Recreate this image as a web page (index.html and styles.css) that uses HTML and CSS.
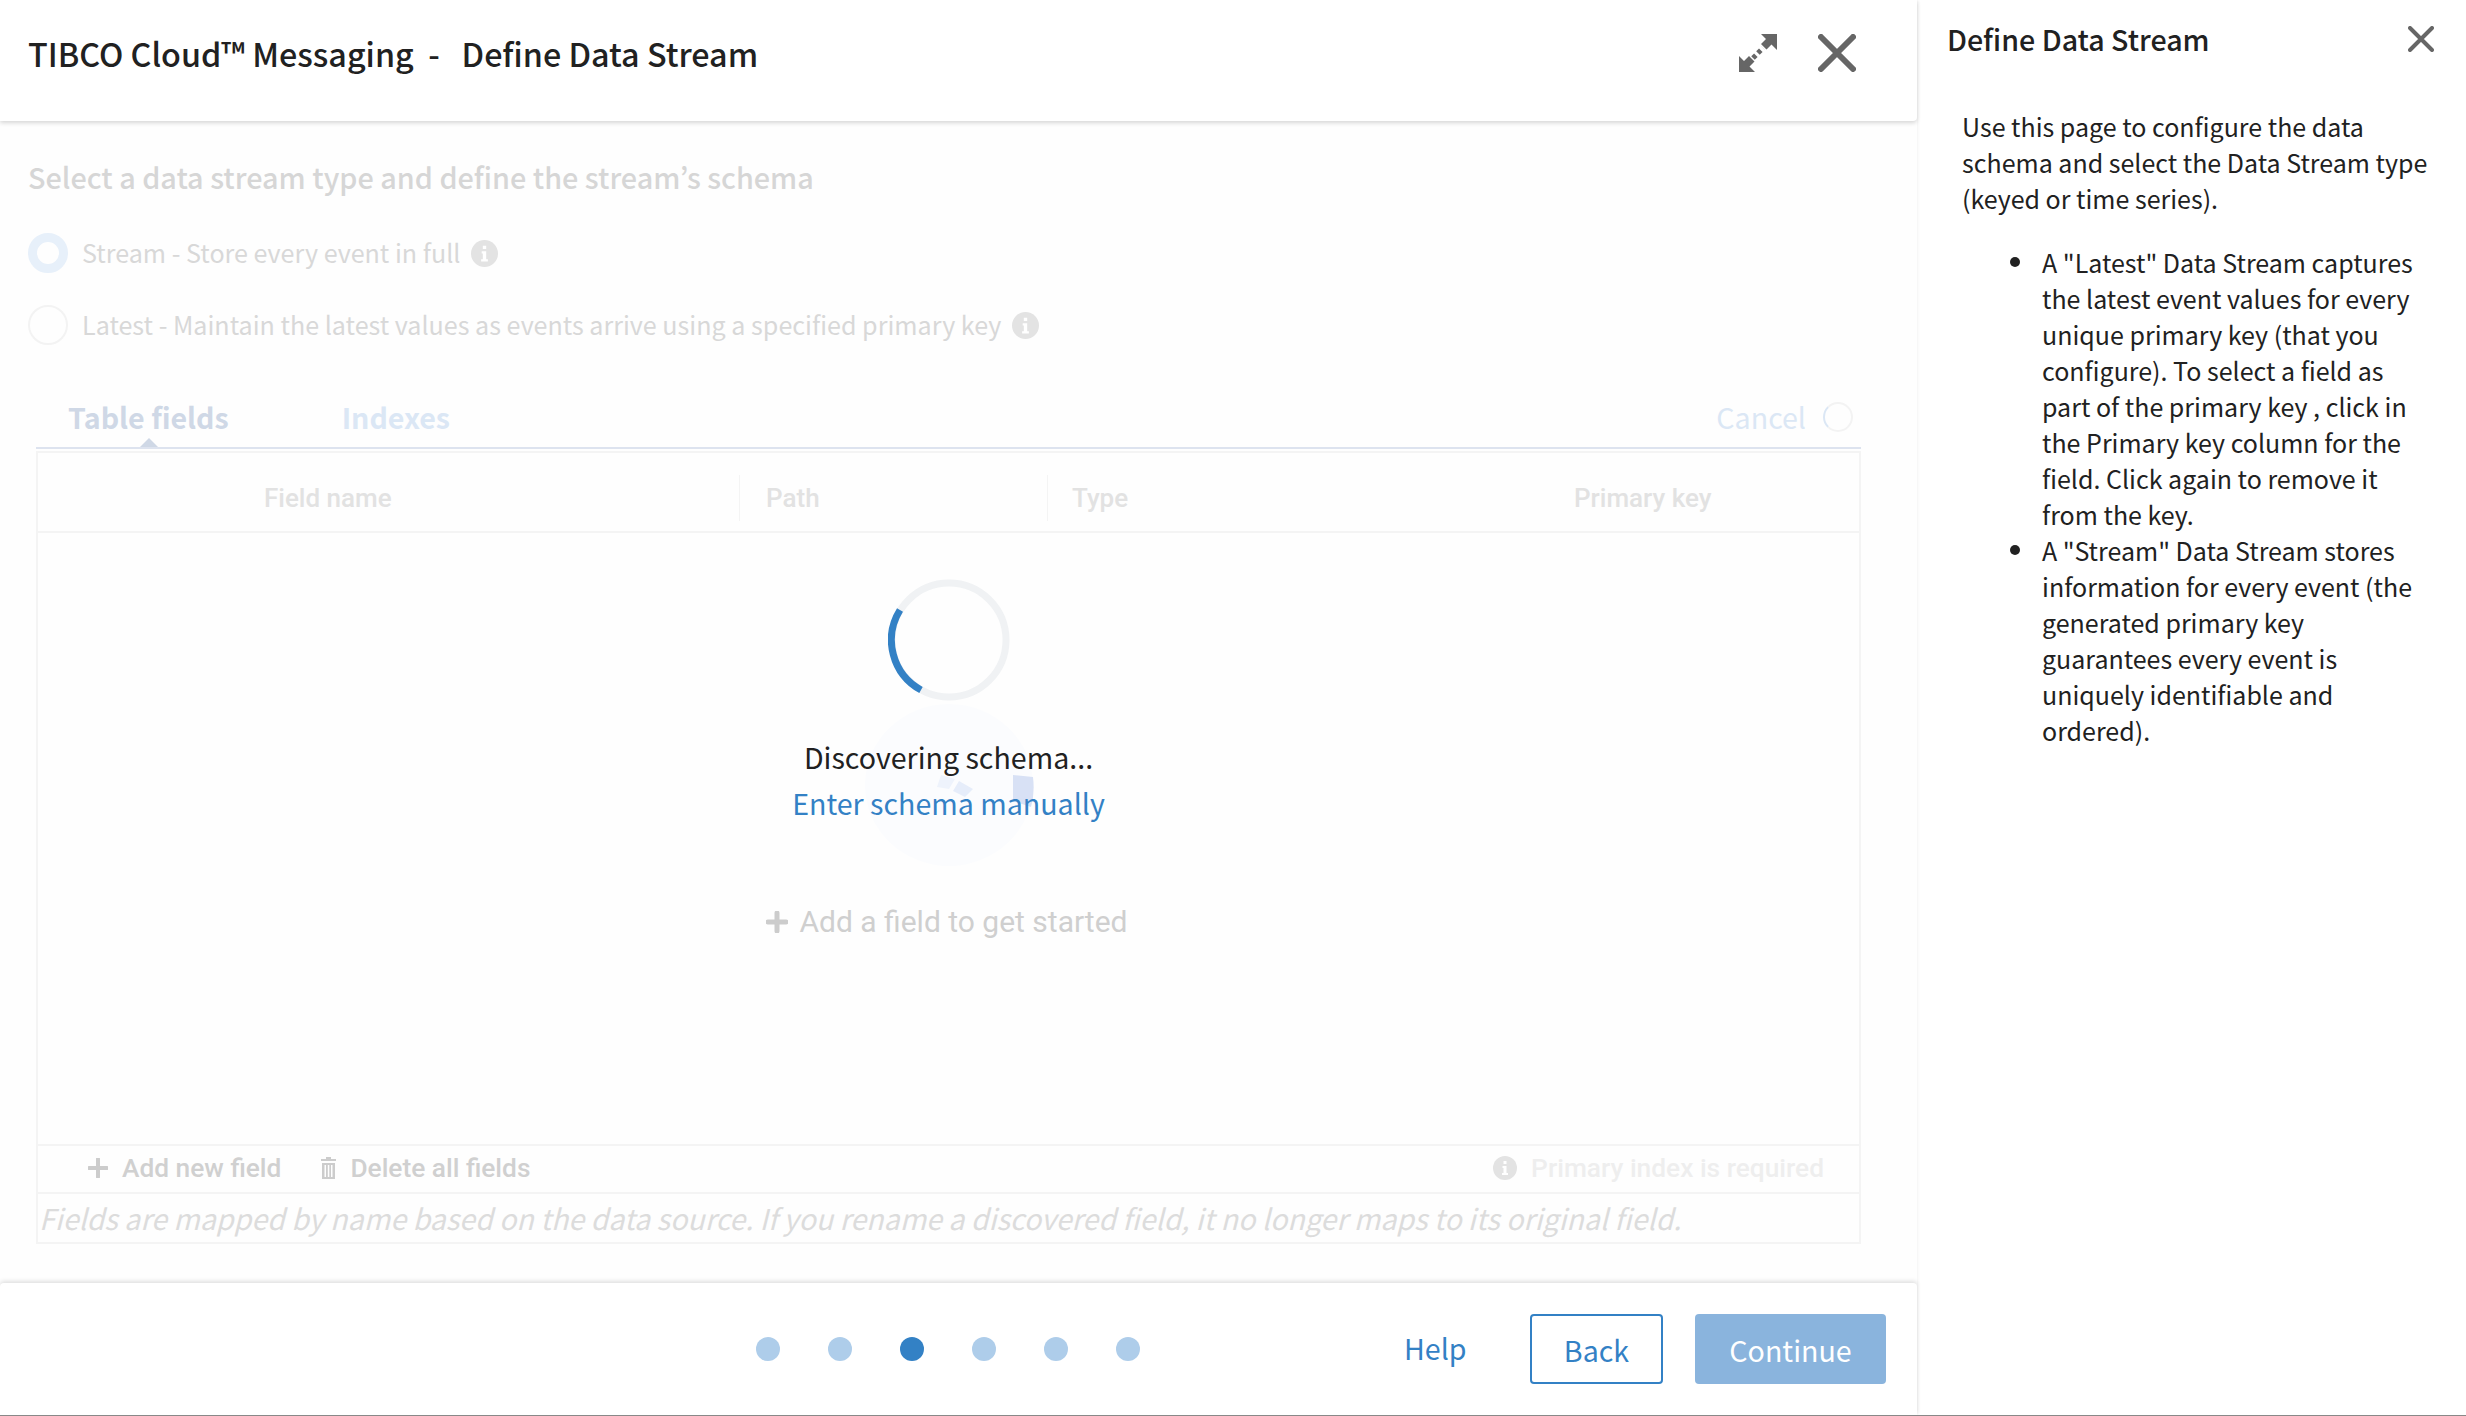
FILE: index.html
```html
<!DOCTYPE html>
<html lang="en">
  <head>
    <meta charset="UTF-8" />
    <title>Define Data Stream</title>
    <link rel="stylesheet" href="styles.css">
  </head>
  <body>
    <div class="app">
      <section class="wizard">
        <header class="wizard-head">
          <h1 class="wizard-title">TIBCO Cloud™ Messaging&nbsp; - &nbsp;&nbsp;Define Data Stream</h1>
          <div class="head-icons">
            <svg class="icon-expand" width="40" height="40" viewBox="0 0 40 40">
              <path d="M23 1h16v16l-5.500-5.500-5 5-5.500-5.500 5-5zM1 39h16l-5.500-5.500 5-5-5.500-5.500-5 5L1 23z" fill="#666"/>
              <path d="M15 25l10-10" stroke="#666" stroke-width="5" stroke-dasharray="4 3"/>
            </svg>
            <svg class="icon-close" width="38" height="38" viewBox="0 0 38 38">
              <path d="M3 3l32 32M35 3L3 35" stroke="#666" stroke-width="6" stroke-linecap="round"/>
            </svg>
          </div>
        </header>

        <main class="wizard-body">
          <h2 class="section-title">Select a data stream type and define the stream’s schema</h2>

          <div class="radio-row">
            <span class="radio radio-on"></span>
            <span class="radio-label">Stream - Store every event in full</span>
            <svg class="info" width="27" height="27" viewBox="0 0 24 24">
              <circle cx="12" cy="12" r="12" fill="#e3e3e3"/>
              <path d="M9.500 10h4v7h1.500v2H9v-2h1.500v-5h-1zM10.500 5h3v3h-3z" fill="#fff"/>
            </svg>
          </div>
          <div class="radio-row">
            <span class="radio"></span>
            <span class="radio-label">Latest - Maintain the latest values as events arrive using a specified primary key</span>
            <svg class="info" width="27" height="27" viewBox="0 0 24 24">
              <circle cx="12" cy="12" r="12" fill="#e3e3e3"/>
              <path d="M9.500 10h4v7h1.500v2H9v-2h1.500v-5h-1zM10.500 5h3v3h-3z" fill="#fff"/>
            </svg>
          </div>

          <div class="tabs">
            <span class="tab tab-active">Table fields</span>
            <span class="tab">Indexes</span>
            <span class="tab-cancel">Cancel</span>
            <span class="cancel-spin"></span>
          </div>

          <div class="grid-box">
            <div class="grid-head">
              <span class="col col-name">Field name</span>
              <span class="col col-path">Path</span>
              <span class="col col-type">Type</span>
              <span class="col col-key">Primary key</span>
            </div>

            <div class="grid-empty">
              <div class="add-hint">
                <svg width="22" height="22" viewBox="0 0 22 22"><path d="M11 2v18M2 11h18" stroke="#ccc" stroke-width="5" stroke-linecap="round"/></svg>
                <span>Add a field to get started</span>
              </div>

              <div class="loader">
                <svg class="loader-spin" width="122" height="122" viewBox="0 0 122 122">
                  <circle cx="61" cy="61" r="57" fill="none" stroke="#f0f2f4" stroke-width="7"/>
                  <path d="M12 31A57 57 0 0 0 33 111" fill="none" stroke="#3381c5" stroke-width="7"/>
                </svg>
                <div class="loader-ghost">
                  <svg width="170" height="164" viewBox="0 0 170 164">
                    <ellipse cx="84" cy="82" rx="84" ry="81" fill="#fbfcfe"/>
                    <path d="M148 72l20 2q2 16-2 30l-18-6z" fill="#d8e1f5"/>
                    <path d="M76 72l14 4-6 10-12-2z" fill="#eef3fc"/>
                    <path d="M94 78l14 8-8 8-12-6z" fill="#e6edfa"/>
                  </svg>
                </div>
                <div class="loader-text">Discovering schema...</div>
                <a class="loader-link">Enter schema manually</a>
              </div>
            </div>

            <div class="grid-tools">
              <span class="tool">
                <svg width="20" height="20" viewBox="0 0 20 20"><path d="M10 1v18M1 10h18" stroke="#ccc" stroke-width="4" stroke-linecap="round"/></svg>
                Add new field
              </span>
              <span class="tool">
                <svg width="15" height="22" viewBox="0 0 15 22"><path d="M5 0h5v2h5v2H0V2h5zM1 6h13v16H1zM3.500 8v12h1.500V8zM6.800 8v12h1.500V8zM10 8v12h1.500V8z" fill="#ccc" fill-rule="evenodd"/></svg>
                Delete all fields
              </span>
              <span class="tool-warn">
                <svg width="24" height="24" viewBox="0 0 24 24">
                  <circle cx="12" cy="12" r="12" fill="#e3e3e3"/>
                  <path d="M9.500 10h4v7h1.500v2H9v-2h1.500v-5h-1zM10.500 5h3v3h-3z" fill="#fff"/>
                </svg>
                Primary index is required
              </span>
            </div>
          </div>
          <p class="grid-note">Fields are mapped by name based on the data source. If you rename a discovered field, it no longer maps to its original field.</p>
        </main>

        <footer class="wizard-foot">
          <div class="steps">
            <span class="step"></span>
            <span class="step"></span>
            <span class="step step-on"></span>
            <span class="step"></span>
            <span class="step"></span>
            <span class="step"></span>
          </div>
          <a class="help-link">Help</a>
          <button class="btn btn-back">Back</button>
          <button class="btn btn-next">Continue</button>
        </footer>
      </section>

      <aside class="help-panel">
        <div class="help-head">
          <h3 class="help-title">Define Data Stream</h3>
          <svg width="26" height="26" viewBox="0 0 26 26"><path d="M2 2l22 22M24 2L2 24" stroke="#666" stroke-width="4" stroke-linecap="round"/></svg>
        </div>
        <p class="help-intro">Use this page to configure the data schema and select the Data Stream type (keyed or time series).</p>
        <ul class="help-list">
          <li>A "Latest" Data Stream captures the latest event values for every unique primary key (that you configure). To select a field as part of the primary key , click in the Primary key column for the field. Click again to remove it from the key.</li>
          <li>A "Stream" Data Stream stores information for every event (the generated primary key guarantees every event is uniquely identifiable and ordered).</li>
        </ul>
      </aside>
    </div>
  </body>
</html>
```

FILE: styles.css
```css
* {
  margin: 0;
  padding: 0;
  box-sizing: border-box;
}
body {
  background-color: #fff;
  font-family: "Noto Sans CJK KR", "Liberation Sans", sans-serif;
  color: #212121;
}
.app {
  display: flex;
  width: 2466px;
  height: 1416px;
  overflow: hidden;
  border-bottom: 1px solid #888;
}
.wizard {
  display: flex;
  flex-direction: column;
  width: 1917px;
  background-color: #fefefe;
  box-shadow: 0 0 4px rgba(0, 0, 0, 0.08);
}
.wizard-head {
  display: flex;
  align-items: center;
  justify-content: space-between;
  height: 121px;
  padding: 0 61px 15px 28px;
  background-color: #fff;
  border-radius: 0 0 4px 0;
  box-shadow: 0 2px 4px rgba(0, 0, 0, 0.16);
}
.wizard-title {
  font-size: 32.300px;
  line-height: 44px;
  font-weight: 500;
}
.head-icons {
  display: flex;
  align-items: center;
  gap: 40px;
}
.wizard-body {
  flex: 1;
  padding: 35px 56px 0 28px;
}
.section-title {
  font-size: 28.800px;
  line-height: 42px;
  font-weight: 500;
  color: #d6d6d6;
  margin-bottom: 35px;
}
.radio-row {
  display: flex;
  align-items: center;
  height: 40px;
  margin-bottom: 32px;
}
.radio {
  width: 40px;
  height: 40px;
  border: 2px solid #f3f3f3;
  border-radius: 50%;
  margin-right: 14px;
}
.radio-on {
  border: 9px solid #e7f0fa;
}
.radio-label {
  font-size: 25.100px;
  color: #d8d8d8;
  margin: 0 11px 2px 0;
}
.tabs {
  display: flex;
  align-items: center;
  height: 72px;
  margin-left: 8px;
  padding: 9px 8px 0 32px;
  border-bottom: 2px solid #dde3ef;
  position: relative;
}
.tab {
  font-size: 28.600px;
  font-weight: 700;
  color: #dbe7f5;
  margin-right: 113px;
}
.tab-active {
  color: #cfd8e6;
}
.tab-active::after {
  content: "";
  position: absolute;
  left: 104px;
  bottom: 0;
  border: 9px solid transparent;
  border-top: 0;
  border-bottom-color: #cfd8e6;
}
.tab-cancel {
  margin-left: auto;
  font-size: 28.600px;
  color: #dbe7f5;
}
.cancel-spin {
  width: 30px;
  height: 30px;
  margin-left: 17px;
  border: 2px solid #f3f3f3;
  border-left-color: #dbe7f5;
  border-radius: 50%;
}
.grid-box {
  margin-left: 8px;
  margin-top: 2px;
  height: 743px;
  display: flex;
  flex-direction: column;
  border: 2px solid #f4f4f4;
  font-family: Roboto, sans-serif;
}
.grid-head {
  display: flex;
  align-items: center;
  height: 80px;
  flex-shrink: 0;
  border-bottom: 2px solid #f4f4f4;
  font-size: 26px;
  font-weight: 500;
  color: #e2e2e2;
}
.col {
  display: flex;
  align-items: center;
  height: 46px;
  margin-top: 12px;
}
.col-name {
  width: 702px;
  padding-left: 226px;
  border-right: 1px solid #f4f4f4;
}
.col-path {
  width: 308px;
  padding-left: 26px;
  border-right: 1px solid #f4f4f4;
}
.col-type {
  width: 526px;
  padding-left: 24px;
}
.grid-empty {
  position: relative;
  flex: 1;
}
.add-hint {
  display: flex;
  align-items: center;
  justify-content: center;
  gap: 11px;
  margin-top: 369px;
  padding-right: 3px;
  font-size: 30px;
  line-height: 40px;
  color: #cfcfcf;
}
.loader {
  position: absolute;
  left: 0;
  right: 0;
  top: 46px;
  text-align: center;
}
.loader-spin {
  display: block;
  margin: 0 auto;
}
.loader-ghost {
  position: absolute;
  left: 827px;
  top: 124px;
  line-height: 0;
}
.loader-text {
  position: relative;
  margin-top: 33px;
  font-family: "Noto Sans CJK KR", sans-serif;
  font-size: 28.600px;
  line-height: 46px;
  color: #212121;
}
.loader-link {
  position: relative;
  display: block;
  font-family: "Noto Sans CJK KR", sans-serif;
  font-size: 28.600px;
  line-height: 46px;
  color: #3381c5;
}
.grid-tools {
  display: flex;
  align-items: center;
  height: 48px;
  flex-shrink: 0;
  padding: 0 35px 2px 50px;
  border-top: 2px solid #f4f4f4;
  font-size: 26.300px;
  font-weight: 500;
  color: #d0d0d0;
}
.tool {
  display: flex;
  align-items: center;
  gap: 14px;
  margin-right: 40px;
}
.tool-warn {
  display: flex;
  align-items: center;
  gap: 14px;
  margin-left: auto;
  color: #eeeeee;
}
.grid-note {
  margin-left: 8px;
  height: 50px;
  padding-left: 1px;
  border: 2px solid #f4f4f4;
  border-top: 0;
  font-size: 28.600px;
  line-height: 47px;
  font-style: italic;
  color: #dcdcdc;
}
.wizard-foot {
  display: flex;
  align-items: center;
  height: 132px;
  padding: 0 31px 0 756px;
  background-color: #fff;
  border-radius: 4px 4px 0 0;
  box-shadow: 0 -2px 4px rgba(0, 0, 0, 0.12);
}
.steps {
  display: flex;
  gap: 48px;
  margin-right: 264px;
}
.step {
  width: 24px;
  height: 24px;
  border-radius: 50%;
  background-color: #aecdea;
}
.step-on {
  background-color: #3381c5;
}
.help-link {
  font-size: 28.600px;
  color: #3381c5;
  margin: 0 auto 3px 0;
}
.btn {
  flex-shrink: 0;
  height: 70px;
  font-family: inherit;
  font-size: 28.600px;
  border-radius: 4px;
}
.btn-back {
  width: 133px;
  margin-right: 32px;
  background-color: #fff;
  border: 2px solid #3381c5;
  color: #3381c5;
}
.btn-next {
  width: 191px;
  background-color: #8ab4dd;
  border: none;
  color: #fff;
}
.help-panel {
  flex: 1;
  padding: 0 20px 0 30px;
  font-size: 25px;
  line-height: 36px;
}
.help-head {
  display: flex;
  align-items: center;
  justify-content: space-between;
  height: 78px;
  padding-right: 12px;
}
.help-title {
  font-size: 28.600px;
  line-height: 40px;
  font-weight: 500;
}
.help-intro {
  margin: 30px 0 28px 15px;
}
.help-list {
  margin: 0 14px 0 95px;
  list-style: none;
}
.help-list li {
  position: relative;
}
.help-list li::before {
  content: "";
  position: absolute;
  left: -32px;
  top: 13px;
  width: 10px;
  height: 10px;
  border-radius: 50%;
  background-color: #212121;
}
```
